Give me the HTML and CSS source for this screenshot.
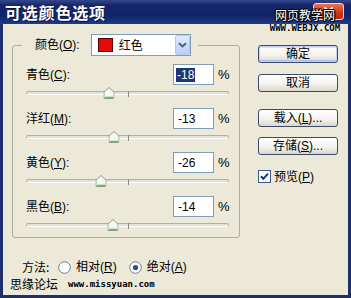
FILE: index.html
```html
<!DOCTYPE html>
<html lang="zh-CN">
<head>
<meta charset="utf-8">
<title>可选颜色选项</title>
<link rel="stylesheet" href="styles.css">
</head>
<body>
<div class="window">
  <div class="titlebar">
    <span class="title">可选颜色选项</span>
    <span class="close"><svg width="11" height="11" viewBox="0 0 11 11"><path d="M2 2 L9 9 M9 2 L2 9" stroke="#fff" stroke-width="2" stroke-linecap="round"/></svg></span>
    <div class="watermark"><span class="wm-cn">网页教学网</span><span class="wm-en">WWW.WEBJX.COM</span></div>
  </div>
  <div class="client">
    <div class="left">
      <fieldset class="group">
        <legend class="legend">
          <span class="legend-inner">
            <span class="lbl">颜色(<u>O</u>):</span>
            <span class="select">
              <span class="swatch"></span>
              <span class="sel-text">红色</span>
              <span class="arrow"><svg width="9" height="6" viewBox="0 0 9 6"><path d="M1 1.2 L4.5 4.5 L8 1.2" fill="none" stroke="#4d6185" stroke-width="2"/></svg></span>
            </span>
          </span>
        </legend>
        <div class="rows">
          <div class="row">
            <div class="row-top"><span class="lbl">青色(<u>C</u>):</span><span class="num"><span class="selected">-18</span></span><span class="pct">%</span></div>
            <div class="slider"><div class="track"><span class="tick"></span><span class="thumb" style="left:41%"><svg width="11" height="12" viewBox="0 0 11 12"><path d="M0.5 5 L5.5 0.5 L10.5 5 V11.5 H0.5 Z" fill="#f7f7f1" stroke="#8f9c8c"/><path d="M1.5 10.5 H9.5" stroke="#62bb5c" stroke-width="1.5"/><path d="M1 6 V10 M10 6 V10" stroke="#b9dcb4" stroke-width="1"/></svg></span></div></div>
          </div>
          <div class="row">
            <div class="row-top"><span class="lbl">洋红(<u>M</u>):</span><span class="num">-13</span><span class="pct">%</span></div>
            <div class="slider"><div class="track"><span class="tick"></span><span class="thumb" style="left:43.5%"><svg width="11" height="12" viewBox="0 0 11 12"><path d="M0.5 5 L5.5 0.5 L10.5 5 V11.5 H0.5 Z" fill="#f7f7f1" stroke="#8f9c8c"/><path d="M1.5 10.5 H9.5" stroke="#62bb5c" stroke-width="1.5"/><path d="M1 6 V10 M10 6 V10" stroke="#b9dcb4" stroke-width="1"/></svg></span></div></div>
          </div>
          <div class="row">
            <div class="row-top"><span class="lbl">黄色(<u>Y</u>):</span><span class="num">-26</span><span class="pct">%</span></div>
            <div class="slider"><div class="track"><span class="tick"></span><span class="thumb" style="left:37%"><svg width="11" height="12" viewBox="0 0 11 12"><path d="M0.5 5 L5.5 0.5 L10.5 5 V11.5 H0.5 Z" fill="#f7f7f1" stroke="#8f9c8c"/><path d="M1.5 10.5 H9.5" stroke="#62bb5c" stroke-width="1.5"/><path d="M1 6 V10 M10 6 V10" stroke="#b9dcb4" stroke-width="1"/></svg></span></div></div>
          </div>
          <div class="row">
            <div class="row-top"><span class="lbl">黑色(<u>B</u>):</span><span class="num">-14</span><span class="pct">%</span></div>
            <div class="slider"><div class="track"><span class="tick"></span><span class="thumb" style="left:43%"><svg width="11" height="12" viewBox="0 0 11 12"><path d="M0.5 5 L5.5 0.5 L10.5 5 V11.5 H0.5 Z" fill="#f7f7f1" stroke="#8f9c8c"/><path d="M1.5 10.5 H9.5" stroke="#62bb5c" stroke-width="1.5"/><path d="M1 6 V10 M10 6 V10" stroke="#b9dcb4" stroke-width="1"/></svg></span></div></div>
          </div>
        </div>
      </fieldset>
      <div class="method">
        <span class="m-label">方法:</span>
        <span class="radio"><svg width="13" height="13" viewBox="0 0 13 13"><circle cx="6.5" cy="6.5" r="5.8" fill="#fdfdfb" stroke="#6f7d92"/></svg></span>
        <span class="r-text">相对(<u>R</u>)</span>
        <span class="radio r2"><svg width="13" height="13" viewBox="0 0 13 13"><circle cx="6.5" cy="6.5" r="5.8" fill="#fdfdfb" stroke="#6f7d92"/><circle cx="6.5" cy="6.5" r="2.6" fill="#2e4a94"/></svg></span>
        <span class="r-text">绝对(<u>A</u>)</span>
      </div>
      <div class="footer"><span class="forum">思缘论坛</span><span class="url">www.missyuan.com</span></div>
    </div>
    <div class="right">
      <span class="btn default">确定</span>
      <span class="btn b-cancel">取消</span>
      <span class="btn b-load">载入(<u>L</u>)...</span>
      <span class="btn b-save">存储(<u>S</u>)...</span>
      <span class="check-row"><span class="checkbox"><svg width="13" height="13" viewBox="0 0 13 13"><rect x="0.5" y="0.5" width="12" height="12" fill="#fff" stroke="#3c5a86"/><path d="M3 6.3 L5.3 8.8 L10 3.6" fill="none" stroke="#1f2f7a" stroke-width="2"/></svg></span><span class="c-text">预览(<u>P</u>)</span></span>
    </div>
  </div>
</div>
</body>
</html>
```
FILE: styles.css
```css
* { box-sizing: border-box; }
html, body { margin: 0; padding: 0; }
body {
  width: 351px;
  height: 298px;
  overflow: hidden;
  font: 12px/14px "Liberation Sans", "Noto Sans CJK SC", sans-serif;
  color: #000;
  background: #ece9d8;
}
u { text-decoration: underline; text-underline-offset: 1px; }

.window { width: 351px; height: 298px; display: flex; flex-direction: column; }

.titlebar {
  position: relative;
  height: 24px;
  flex: none;
  display: flex;
  align-items: flex-start;
  background: linear-gradient(180deg, #34478a 0%, #15276a 22%, #10246a 65%, #1f3b84 100%);
}
.title {
  flex: 1;
  padding: 3px 0 0 5px;
  font: bold 16px/18px "Noto Sans CJK SC", sans-serif;
  color: #fff;
  letter-spacing: 0.8px;
  text-shadow: 1px 1px 0 #08123c;
}
.close {
  margin: 3px 7px 0 0;
  width: 31px;
  height: 17px;
  border: 1px solid #f1d6cc;
  border-radius: 3px;
  background: linear-gradient(#ea7556, #cc3a1d 55%, #b52a12);
  display: flex;
  align-items: flex-start;
  justify-content: center;
  padding-top: 2px;
}
.watermark {
  position: absolute;
  left: 268px;
  top: 8px;
  width: 74px;
  display: flex;
  flex-direction: column;
  align-items: center;
}
.wm-cn {
  font: 12px/14px "Noto Sans CJK SC", sans-serif;
  color: #fff;
  text-shadow: -1px 0 #000, 1px 0 #000, 0 -1px #000, 0 1px #000, 1px 1px #000, -1px -1px #000;
}
.wm-en {
  margin-top: 2px;
  font: bold 9px/8px "DejaVu Sans Mono", monospace;
  color: #000;
  text-shadow: 0 0 1px #fff;
}

.client {
  flex: 1;
  display: flex;
  border: 3px solid #1f2f6c;
  border-top: 0;
}
.left { flex: none; display: flex; flex-direction: column; }

.group {
  margin: 10px 0 0 9px;
  padding: 0;
  width: 228px;
  min-width: 0;
  border: 1px solid #aeac9f;
  border-radius: 3px;
}
.legend { margin-left: 9px; padding: 0 7px 0 13px; }
.legend-inner { display: flex; align-items: center; height: 22px; }
.legend .lbl { margin-right: 11px; }

.select {
  width: 100px;
  height: 22px;
  border: 1px solid #7f9db9;
  background: #fff;
  display: flex;
  align-items: center;
  padding-left: 6px;
}
.swatch { width: 15px; height: 14px; background: #e30b0b; border: 1px solid #5a0000; flex: none; }
.sel-text { margin-left: 6px; flex: 1; font-family: "Noto Sans CJK SC", sans-serif; }
.arrow {
  width: 15px;
  height: 20px;
  flex: none;
  background: linear-gradient(#e3ebfd, #bccdf5);
  border: 1px solid #b3c6ef;
  border-radius: 2px;
  display: flex;
  align-items: center;
  justify-content: center;
}

.rows { padding: 8px 10px 5px 13px; }
.row { margin-bottom: 8px; }
.row:last-child { margin-bottom: 0; }
.row-top { height: 21px; display: flex; align-items: center; }
.row-top .lbl { flex: 1; }
.num {
  width: 41px;
  height: 21px;
  border: 1px solid #7f9db9;
  background: #fff;
  padding-left: 4px;
  display: flex;
  align-items: center;
  font: 12px/14px "Liberation Sans", sans-serif;
}
.selected { background: #1d3677; color: #fff; margin-left: -2px; padding: 0 1px 0 1px; }
.pct { width: 11px; margin-left: 4px; font: 13px/14px "Liberation Sans", sans-serif; }

.slider { margin-top: 1px; height: 14px; display: flex; align-items: center; }
.track {
  position: relative;
  width: 100%;
  height: 4px;
  border: 1px solid #b2b0a4;
  border-bottom-color: #fff;
  border-radius: 2px;
  background: #e4e2d7;
}
.tick { position: absolute; left: 50%; top: -1px; width: 1px; height: 6px; background: #8d8b80; }
.thumb { position: absolute; top: -5px; width: 11px; height: 12px; transform: translateX(-50%); display: block; }
.thumb svg { display: block; }

.method {
  margin-top: 22px;
  height: 14px;
  padding-left: 19px;
  display: flex;
  align-items: center;
  line-height: 12px;
}
.m-label { width: 36px; font-family: "Noto Sans CJK SC", sans-serif; }
.radio { width: 13px; height: 13px; display: block; }
.radio svg { display: block; }
.r-text { margin-left: 5px; }
.r2 { margin-left: 12px; }

.footer { margin-top: 3px; height: 13px; padding-left: 7px; display: flex; align-items: center; line-height: 12px; }
.forum { font-family: "Noto Sans CJK SC", sans-serif; }
.url { margin-left: 10px; font: bold 9px/8px "DejaVu Sans Mono", monospace; }

.right { display: flex; flex-direction: column; margin-left: 18px; padding-top: 21px; }
.btn {
  width: 80px;
  height: 18px;
  border: 1px solid #3d4a68;
  border-radius: 3px;
  background: linear-gradient(#ffffff, #f4f3ee 55%, #dad7ca);
  display: flex;
  align-items: center;
  justify-content: center;
}
.btn.default { box-shadow: inset 0 0 0 1px #c0d1f4, inset 0 2px 0 #d4e0fa, inset 0 -2px 0 #a9bef0; }
.b-cancel { margin-top: 11px; }
.b-load { margin-top: 17px; }
.b-save { margin-top: 10px; }
.check-row { margin-top: 15px; height: 13px; display: flex; align-items: center; }
.checkbox { width: 13px; height: 13px; display: block; }
.checkbox svg { display: block; }
.c-text { margin-left: 3px; }
```
